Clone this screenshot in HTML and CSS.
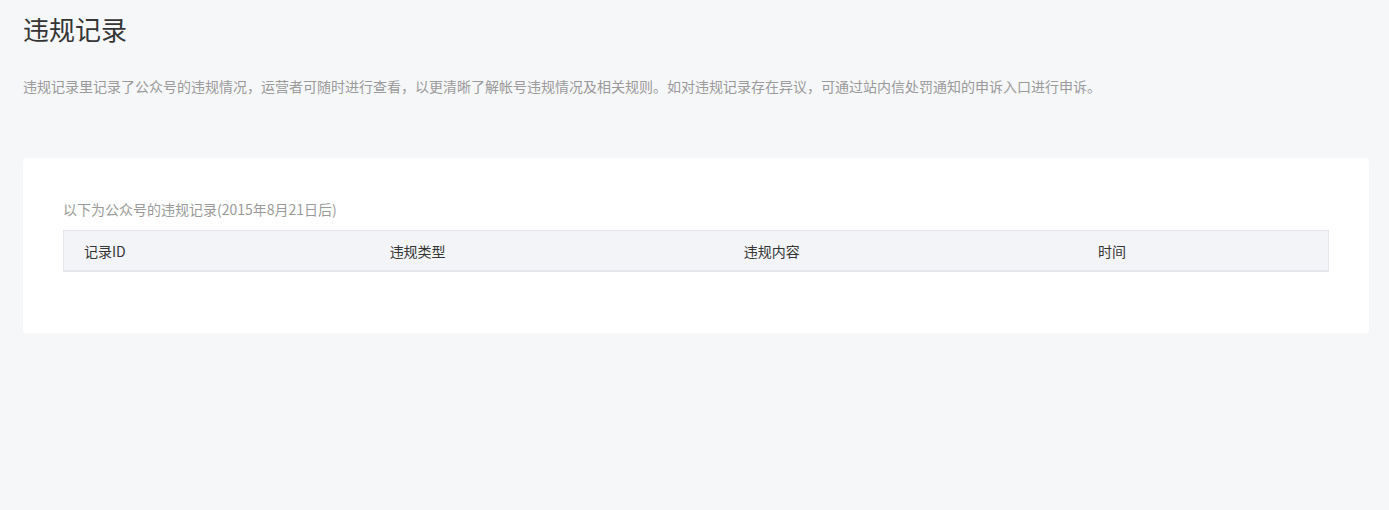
FILE: index.html
```html
<!DOCTYPE html>
<html lang="zh-CN">
<head>
<meta charset="utf-8">
<title>违规记录</title>
<link rel="stylesheet" href="styles.css">
</head>
<body>
<div class="page">
  <h1 class="title">违规记录</h1>
  <p class="desc">违规记录里记录了公众号的违规情况，运营者可随时进行查看，以更清晰了解帐号违规情况及相关规则。如对违规记录存在异议，可通过站内信处罚通知的申诉入口进行申诉。</p>
  <div class="card">
    <div class="caption">以下为公众号的违规记录(2015年8月21日后)</div>
    <table class="table">
      <colgroup>
        <col class="c1"><col class="c2"><col class="c3"><col class="c4">
      </colgroup>
      <thead>
        <tr><th>记录ID</th><th>违规类型</th><th>违规内容</th><th>时间</th></tr>
      </thead>
    </table>
  </div>
</div>
</body>
</html>
```
FILE: styles.css
```css
html, body {
  margin: 0;
  padding: 0;
  background: #f6f7f9;
  font-family: "Noto Sans CJK SC", "Noto Sans", sans-serif;
}
.page {
  padding: 10px 20px 0 23px;
}
.title {
  margin: 0;
  font-size: 26px;
  font-weight: normal;
  line-height: 38px;
  color: #353535;
}
.desc {
  margin: 28px 0 0;
  font-size: 14px;
  line-height: 20px;
  color: #9a9a9a;
}
.card {
  margin-top: 62px;
  background: #fff;
  border-radius: 3px;
  box-shadow: 0 1px 2px rgba(0,0,0,0.04);
  padding: 41px 40px 61px;
}
.caption {
  font-size: 14px;
  line-height: 20px;
  color: #9a9a9a;
  margin-bottom: 11px;
}
.table {
  width: 100%;
  border-collapse: collapse;
  table-layout: fixed;
}
.c1 { width: 24.2%; }
.c2 { width: 28%; }
.c3 { width: 28%; }
.c4 { width: 19.8%; }
.table th {
  background: #f3f4f7;
  border-top: 1px solid #e4e6eb;
  border-bottom: 2px solid #e4e6eb;
  height: 39px;
  padding: 0 20px;
  text-align: left;
  font-weight: normal;
  font-size: 14px;
  color: #353535;
}
.table th:first-child { border-left: 1px solid #e4e6eb; }
.table th:last-child { border-right: 1px solid #e4e6eb; }
```
